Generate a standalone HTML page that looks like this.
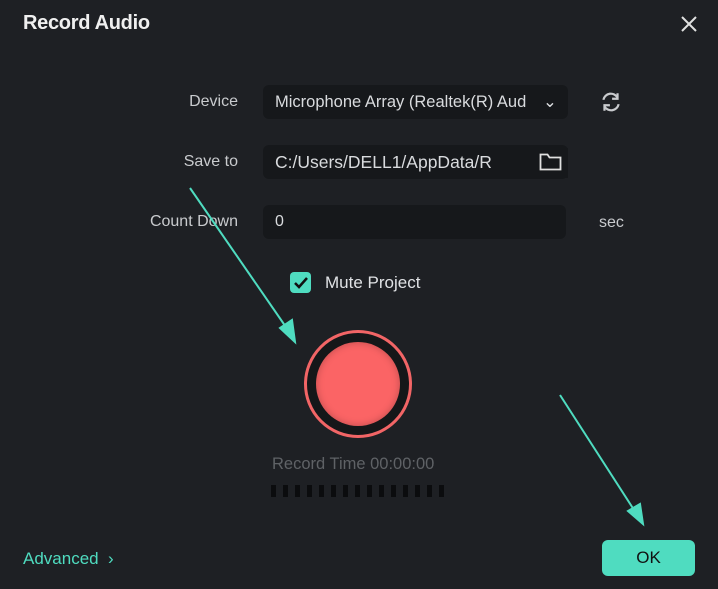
<!DOCTYPE html><html><head><style>
body{margin:0;width:718px;height:589px;background:#1e2024;font-family:"Liberation Sans",sans-serif;position:relative;overflow:hidden;color:#d6d8db}
.a{position:absolute}
.lbl{font-size:16px;color:#c9cbce;text-align:right;width:120px;left:118px}
.box{background:#16181b;border-radius:6px;height:34px;left:263px;width:305px;font-size:16px;line-height:34px;color:#d9dbde;padding-left:12px;box-sizing:border-box;overflow:hidden;white-space:nowrap}
</style></head><body>
<div class="a" style="left:23px;top:12px;font-size:20px;color:#f0f0f0;font-weight:bold;letter-spacing:-0.3px">Record Audio</div>
<svg class="a" style="left:680px;top:15px" width="18" height="18"><path d="M2 2L16 16M16 2L2 16" stroke="#e0e0e0" stroke-width="2"/></svg>
<div class="a lbl" style="top:93px">Device</div>
<div class="a box" style="top:85px;font-size:16.5px">Microphone Array (Realtek(R) Aud<span style="position:absolute;left:280px;top:0">⌄</span></div>
<svg class="a" style="left:599px;top:90px" width="24" height="24" viewBox="0 0 22 20"><path d="M4 8A7 7 0 0 1 17 6M18 12A7 7 0 0 1 5 14" fill="none" stroke="#c9cbce" stroke-width="2"/><path d="M17 2v5h-5M5 18v-5h5" fill="none" stroke="#c9cbce" stroke-width="2"/></svg>
<div class="a lbl" style="top:153px">Save to</div>
<div class="a box" style="top:145px;font-size:17.5px">C:/Users/DELL1/AppData/R</div>
<div class="a" style="left:530px;top:148px;width:38px;height:30px;background:#16181b"></div>
<svg class="a" style="left:539px;top:152px" width="23" height="20"><path d="M1.5 2.5h7l2 3h11v12h-20z" fill="none" stroke="#e0e0e0" stroke-width="1.8"/></svg>
<div class="a lbl" style="top:213px">Count Down</div>
<div class="a box" style="top:205px;width:303px">0</div>
<div class="a" style="left:599px;top:214px;font-size:16px;color:#c9cbce">sec</div>
<div class="a" style="left:290px;top:272px;width:21px;height:21px;background:#4fdcc0;border-radius:4px"></div>
<svg class="a" style="left:290px;top:272px" width="21" height="21"><path d="M5 11l4 4 8-9" fill="none" stroke="#111" stroke-width="2.5"/></svg>
<div class="a" style="left:325px;top:273px;font-size:17px;color:#e0e2e5">Mute Project</div>
<div class="a" style="left:304px;top:330px;width:102px;height:102px;border:3px solid #f26566;border-radius:50%;background:#151719"></div>
<div class="a" style="left:316px;top:342px;width:84px;height:84px;border-radius:50%;background:#fb6465;box-shadow:inset 0 0 8px rgba(0,0,0,.25)"></div>
<div class="a" style="left:272px;top:455px;font-size:16.5px;color:#5f6266">Record Time 00:00:00</div>
<div class="a" style="left:271px;top:485px;width:180px;height:12px;background:repeating-linear-gradient(90deg,#0b0c0e 0 5px,transparent 5px 12px)"></div>
<svg class="a" style="left:0;top:0" width="718" height="589"><g stroke="#4fdcc0" stroke-width="2" fill="#4fdcc0"><path d="M190 188L288 330"/><path d="M295 342L280 328L292 320z"/><path d="M560 395L636 513"/><path d="M643 524L628 511L640 504z"/></g></svg>
<div class="a" style="left:23px;top:549px;font-size:17px;color:#4fdcc0">Advanced &nbsp;›</div>
<div class="a" style="left:602px;top:540px;width:93px;height:36px;background:#4fdcc0;border-radius:6px;color:#111;font-size:17px;text-align:center;line-height:36px">OK</div>
</body></html>
